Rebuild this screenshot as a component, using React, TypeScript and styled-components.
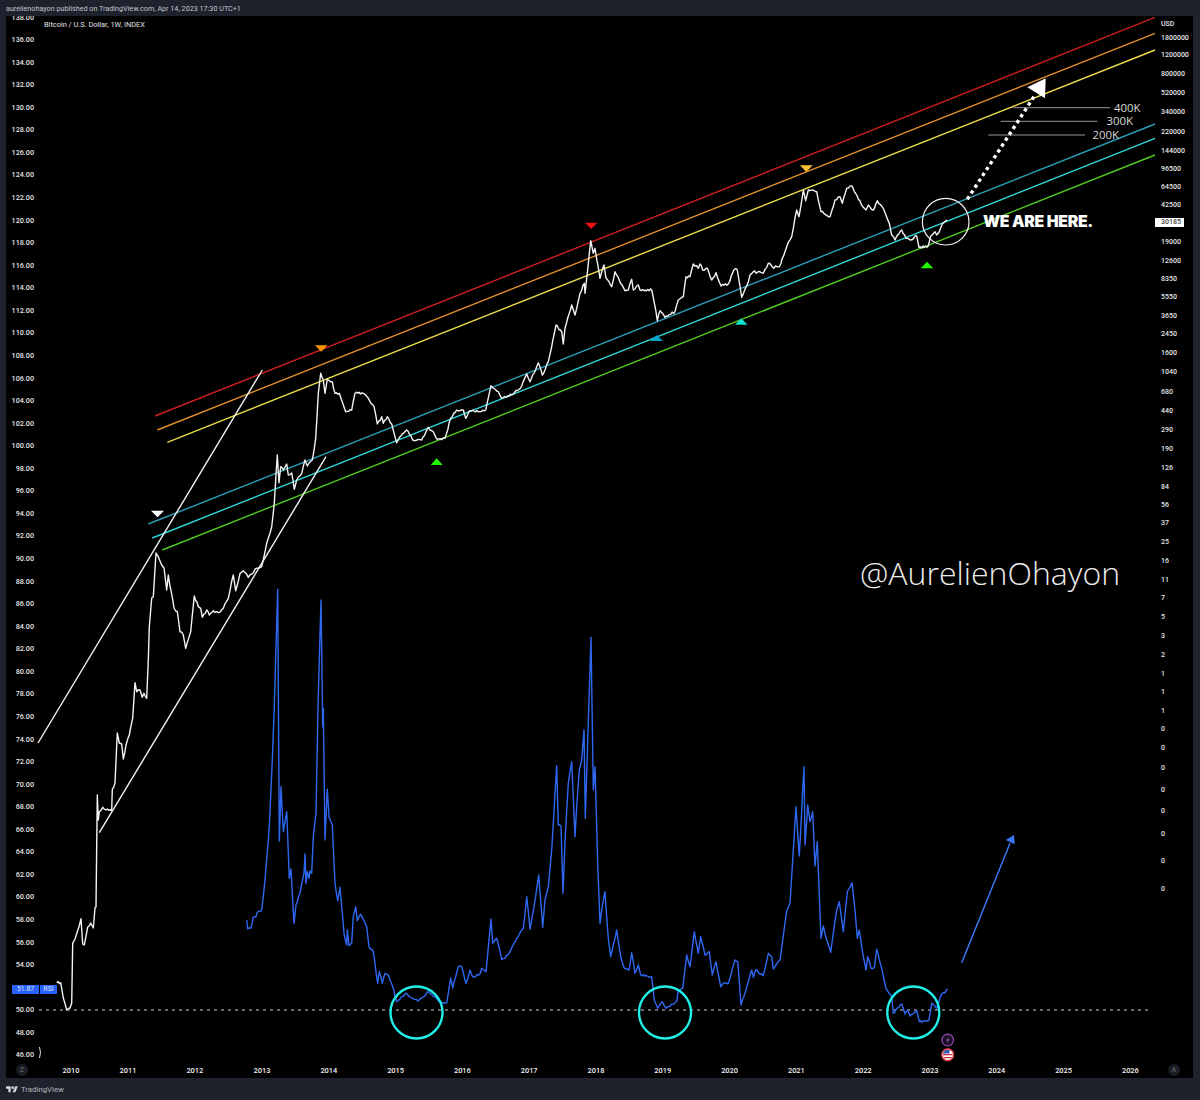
import React from 'react';
import styled, { createGlobalStyle } from 'styled-components';

const GlobalStyle = createGlobalStyle`
  html, body {
    margin: 0;
    padding: 0;
    background: #1e222d;
  }
`;

// own compositing layer, so the small axis text is anti-aliased in plain grey
const Page = styled.div`
  width: 1200px;
  height: 1100px;
  display: flex;
  flex-direction: column;
  background: #1e222d;
  font-family: Roboto, "Liberation Sans", sans-serif;
  overflow: hidden;
  will-change: opacity;
`;

const TopBar = styled.header`
  height: 16px;
  flex: none;
  padding: 1px 0 0 6px;
  box-sizing: border-box;
  display: flex;
  align-items: center;
  font-size: 7.2px;
  color: #c2c5ce;
`;

const ChartFrame = styled.main`
  position: relative;
  width: 1187px;
  height: 1062px;
  margin-left: 6px;
  flex: none;
  background: #000;
  display: grid;
  grid-template-columns: 32px 1117px 38px;
  grid-template-rows: 1044px 18px;
`;

const ChartTitle = styled.div`
  position: absolute;
  left: 38px;
  top: 4px;
  font-size: 7.4px;
  line-height: 10px;
  color: #e0e2e8;
`;

const PriceAxis = styled.div`
  overflow: hidden;
  display: flex;
  flex-direction: column;
`;

const PriceLabel = styled.div`
  flex: none;
  height: 22.57px;
  line-height: 22.57px;
  padding-right: 4px;
  text-align: right;
  font-size: 7.2px;
  font-weight: 500;
  color: #e4e6ea;
  &:first-child {
    margin-top: -9.5px;
  }
`;

const Plot = styled.div`
  position: relative;
  width: 1117px;
  height: 1044px;
`;

const PlotSvg = styled.svg`
  display: block;
  width: 100%;
  height: 100%;
  overflow: visible;
`;

const Series = styled.polyline<{ $color: string }>`
  fill: none;
  stroke: ${(p) => p.$color};
  stroke-width: 1.4;
  stroke-linejoin: round;
`;

const Trend = styled.line<{ $color: string }>`
  stroke: ${(p) => p.$color};
  stroke-width: 1.4;
`;

const Ring = styled.circle<{ $color: string; $width: number }>`
  fill: none;
  stroke: ${(p) => p.$color};
  stroke-width: ${(p) => p.$width};
`;

const LevelNote = styled.span<{ $x: number; $y: number }>`
  position: absolute;
  left: ${(p) => p.$x - 38}px;
  top: ${(p) => p.$y - 16}px;
  transform: translateY(-50%);
  font-family: "Open Sans", sans-serif;
  font-size: 11.4px;
  line-height: 12px;
  color: #d8d8d8;
`;

const HereNote = styled.span`
  position: absolute;
  left: 945px;
  top: 205.2px;
  transform: translateY(-50%);
  font-family: Inter, sans-serif;
  font-size: 15.8px;
  font-weight: 900;
  letter-spacing: -0.3px;
  white-space: nowrap;
  color: #fff;
`;

const Watermark = styled.span`
  position: absolute;
  left: 822px;
  top: 556px;
  transform: translateY(-50%);
  font-family: "Open Sans", sans-serif;
  font-size: 32px;
  font-weight: 300;
  white-space: nowrap;
  color: #ececec;
`;

const ValueAxis = styled.div`
  display: flex;
  flex-direction: column;
  padding-top: 1px;
`;

const ValueLabel = styled.div`
  flex: none;
  display: flex;
  align-items: center;
  padding-left: 6px;
  font-size: 7px;
  font-weight: 500;
  color: #e4e6ea;
`;

const PriceTag = styled.span`
  width: 29px;
  height: 9px;
  margin-left: -6.5px;
  padding-left: 6.5px;
  box-sizing: border-box;
  line-height: 9px;
  background: #fff;
  color: #444;
`;

const TimeAxis = styled.div`
  grid-column: 1 / -1;
  display: flex;
  align-items: center;
  padding: 2px 0 0 10px;
`;

const CornerBadge = styled.span<{ $end?: boolean }>`
  width: 12px;
  height: 12px;
  flex: none;
  border-radius: 50%;
  display: flex;
  align-items: center;
  justify-content: center;
  margin: ${(p) => (p.$end ? '0 13px 0 auto' : '0 19px 0 0')};
  background: #1b1d24;
  color: #5d606b;
  font-size: 6.5px;
  font-weight: 500;
`;

const YearLabel = styled.span<{ $width: number }>`
  flex: 0 0 ${(p) => p.$width}px;
  text-align: center;
  font-size: 7.4px;
  font-weight: 500;
  color: #f2f2f2;
`;

const RsiTag = styled.div`
  position: absolute;
  left: 6px;
  top: 969px;
  height: 9px;
  display: flex;
  gap: 1px;
  font-size: 6.8px;
  line-height: 9px;
  color: #dbe5ff;
`;

const RsiCell = styled.span<{ $width: number }>`
  width: ${(p) => p.$width}px;
  text-align: center;
  background: #2962ff;
`;

const Footer = styled.footer`
  flex: 1;
  display: flex;
  align-items: center;
  gap: 3px;
  padding-left: 6px;
  font-size: 7.8px;
  color: #b2b5be;
`;

const priceLine = `56.7,982.7 60.7,982.7 63.3,998 66.7,1010 70,1008 71.7,1003 72.7,943.3 75,939 77.3,931.7 81,918.7 82.7,944 84.3,945 87.7,927 90.7,923 93.3,928 95,908 96,906.7 97.3,795 98.3,820 99.3,811.7 102.7,807.3 106,810 111.7,810.7 112.3,789.3 115,783 117.3,733 119.3,743 121.7,744 123.3,759 126,745 129.3,735 132.7,718 135,682.7 136.7,691.7 140,690 142.3,697.3 144,693.3 146.7,698.3 148.3,660 149.3,626.7 151.7,598 153.3,597 156,553 158.3,556.7 161.7,565 164,568 166.7,590 168.3,575 174,608 177.3,611.7 180,631.7 183.3,635 185.7,648.3 190.7,631.7 194.3,596 198.3,606.7 200.7,608.3 202.3,617.3 206.7,610 209.3,615 213.3,610.7 218.3,612.7 223.3,608.3 228.3,598.3 233.3,575 235.7,590.7 240,573.3 243.3,570.7 248.3,577.3 256.7,568.3 261.7,566.7 266.7,543.3 271.7,526.7 274.3,503 277.3,455 279,482.7 280.7,466.7 283.3,470 286.7,464 288.3,475 291.7,473 294.3,489.3 296.7,480 301.7,473.3 305,460 307.3,466 312.3,460 315.7,438.3 318.3,393.3 320.7,373.3 323.3,380 325,393.3 327.3,379.3 332.3,381.7 335,393.3 339.3,393.3 345.7,411.7 351.7,410 355,393.3 363.3,393.3 368.3,398.3 374,406.7 377.3,424 381.7,416.7 383.3,423.3 387.3,416.7 391.7,424 396.7,442.7 400,436.7 406.7,430 412.7,440 421.7,440 428.3,427.3 433.3,431.7 437.3,439.3 445,438.3 450.7,418.3 456.7,410 463.3,410 465.7,418.3 470,410.7 478.3,411.7 485.7,410 491,385.7 498.3,391.7 501.7,398.3 513.3,394 521.7,386 526.7,374 530,381.7 538.3,362.7 542.3,375 548.3,361.7 556,325 561.7,331.7 563.3,344 565,328.3 571.7,305 575,315 580,293.3 584.3,283.3 585,293.3 590.7,240.7 593.3,253.3 595,248.3 600,278.3 604,265 606,278.3 611.7,286.7 615,271.7 625,290.7 628.3,290 631.7,279.3 633.3,290 638.3,285 640,290 651.7,290 656,311.7 657.3,320.7 660,310.7 665,317.3 675,311.7 678.3,300 683.3,296.7 686,276.7 690,276.7 693.3,264 698.3,268.3 700,264 702.7,270 707.3,268.3 711.7,280 716,272.7 721,286 728.3,284 734.3,269.3 737.3,270 741.7,297.3 746.7,286 750,275 753.3,271.7 763.3,273.3 768.3,263.3 772.7,267.3 779.3,266.7 786.7,246.7 791.7,236.7 796.7,210 799,216.7 803.3,190 805.7,200.7 808.3,190 816.7,191.7 821,211.7 830,216.7 835,200 840,196.7 842.3,203.3 846.7,188.3 851.7,186 858.3,199.3 866,210 868.3,205 873.3,210 877.3,200.7 883.3,208.3 889.3,223.3 891.7,235 895,240 901.7,230 906,238.3 910,240 916.7,236 919,247.3 928.3,246 930.7,236 935,231.7 936.7,235 939.3,231.7 942.7,223.3 947.3,220`;

const rsiLine = `246.7,920 247.7,929 250.7,928.3 253.3,917.3 256,916.7 257.3,912.3 261.7,910 265,880 269.3,826.7 272.3,760 274.3,706.7 277.7,589.3 279.3,841 281,786.7 283.3,831.7 286.7,811.7 289.3,878.3 291,869 294,923.3 296,905 300,893.3 304,873.3 305,854 306,883.3 307.3,871.7 309,878.3 310,871 311.7,873.3 313.3,836.7 316,813.3 318,706.7 321,600 322.7,726.7 323.3,708.3 325,840 327.3,789.3 329,816.7 332.3,825 335,883.3 337.7,900.7 340,887.3 344,933.3 346.7,945 347.3,930 349,945.7 351.7,943.3 353.3,916.7 355.7,906.7 357.3,920.7 360.7,914.3 366.7,926.7 369,946.7 373.3,951.7 377.7,983.3 379.3,971.7 382.3,983.3 385,973.3 388.3,975 393.3,988.3 396.7,1001.7 400,999 406.7,993.3 411.7,998 418,1001 423,997 428.3,991.7 435,996.7 441.7,1003.3 446.7,1003 450.7,978 452.7,988 458.3,966.7 461.7,966.7 466,983.3 470,970 472.7,976.7 480,974 481.7,968.3 486,971.7 491,919 492.7,943.3 496.7,938.3 501.7,959.3 505,958.3 510,951.7 516.7,938.3 523.3,928.3 526.7,896.7 530,929.3 534,906.7 538.7,875 542.7,927.3 545,900 548.3,886.7 551.7,850 556.7,765.7 558.3,825 561,826 563,893.3 565,841.7 568.3,783.3 571.7,761.7 575,836.7 576.7,806.7 579.3,770 581.7,760 584,730 585.3,818.3 591,637.3 593.3,790 595,766.7 597.7,863.3 600,923.3 603.3,900 605,891.7 608.3,938.3 610.7,956.7 616.7,930 620.7,956.7 624.3,968.3 629,970 631.7,952.7 635,973.3 638.3,965 640.7,975 651.7,976.7 654.3,1000 657.7,1008.3 661.7,1001.7 666,1008.3 676.7,1001.7 678.3,990 682.7,988.3 686.7,955 690,966.7 694.3,931.7 698.3,953.3 700.7,936.7 705,955 709.3,951.7 712.3,975 716,961.7 720.7,986.7 723.3,983.3 728.3,983.3 735,960 737.7,961.7 741,1005 748.3,981.7 751.7,970 753.3,977.3 755.7,970 763.3,975.7 768.3,953.3 771.7,956.7 773.3,969 776.7,964 780,960 786.7,910.7 790,903.3 796,806.7 799.3,856 804,766.7 805,845 807.7,805 810,821.7 812.7,811.7 815,866 817.3,841.7 821,938.3 823.3,926 826.7,940 830.7,952.3 836.7,910 839.3,901.7 843.3,931.7 847.3,891.7 852,882.7 855,910 857.3,938.3 859.3,930 862.7,953.3 866,970 867.7,956.7 871,968.3 874.3,967.7 876.7,949.3 881.7,968.3 886,988.3 891.7,996.7 893.3,1013.3 901.7,1004 905,1014 907.7,1010 910,1016 916.7,1010.7 919.3,1021.7 928.7,1020.7 931.7,1003.3 936.7,1008.3 941.7,994 945,992.7 947.3,988.7`;

// the traced points are coarser than the weekly candles, so long segments get small wiggles
const roughen = (line: string, amount: number) => {
  const pts = line.split(' ').map((p) => p.split(',').map(Number));
  let seed = 7;
  const out: string[] = [];
  pts.forEach(([x, y], i) => {
    out.push(`${x},${y}`);
    const next = pts[i + 1];
    if (!next || next[0] - x < 2.6) return;
    const steps = Math.floor((next[0] - x) / 1.3);
    for (let s = 1; s < steps; s++) {
      seed = (seed * 137 + 59) % 251;
      const t = s / steps;
      const jitter = (seed / 125 - 1) * amount;
      out.push(`${(x + (next[0] - x) * t).toFixed(1)},${(y + (next[1] - y) * t + jitter).toFixed(1)}`);
    }
  });
  return out.join(' ');
};

const trends = [
  { color: '#d01f1f', x1: 155, y1: 416, x2: 1155, y2: 17.3 },
  { color: '#df8c2b', x1: 157.3, y1: 430, x2: 1155, y2: 33.3 },
  { color: '#ecdc4a', x1: 167.3, y1: 442.3, x2: 1155, y2: 50 },
  { color: '#2a9db8', x1: 148.3, y1: 524, x2: 1155, y2: 124 },
  { color: '#2cd6d6', x1: 152.3, y1: 538, x2: 1155, y2: 138.3 },
  { color: '#4fc91d', x1: 162.3, y1: 550, x2: 1155, y2: 155 },
  { color: '#f2f2f2', x1: 38, y1: 743, x2: 262.3, y2: 370 },
  { color: '#f2f2f2', x1: 99.3, y1: 832.7, x2: 326, y2: 456.7 },
];

const markers = [
  { color: '#ffffff', points: '151,510.7 164,510.7 157.5,517.3' },
  { color: '#ff9800', points: '315,345.3 327.5,345.3 321.2,351.7' },
  { color: '#f01010', points: '585,222.7 597.5,222.7 591.2,229' },
  { color: '#fbc02d', points: '800,165.3 812.7,165.3 806.3,172' },
  { color: '#22f800', points: '430.7,465 442.7,465 436.7,458.3' },
  { color: '#00a5cc', points: '650,341 663,341 656.5,335' },
  { color: '#14e0cf', points: '735,324.7 747.5,324.7 741.2,318.3' },
  { color: '#22f800', points: '920.7,268.3 933.3,268.3 927,261.7' },
];

const levels = [
  { label: '400K', x1: 1013.3, x2: 1110, y: 107.7, textX: 1114 },
  { label: '300K', x1: 1000.7, x2: 1097.3, y: 121.3, textX: 1106.5 },
  { label: '200K', x1: 988.3, x2: 1085, y: 135, textX: 1092.5 },
];

const priceLabels = Array.from({ length: 47 }, (_, i) => (138 - i * 2).toFixed(2));

// centre y of each label on the right scale, in page pixels
const scale: [string, number][] = [
  ['USD', 23], ['1800000', 36], ['1200000', 54], ['800000', 72], ['520000', 92], ['340000', 111],
  ['220000', 131], ['144000', 150], ['96500', 168], ['64500', 186], ['42500', 205], ['30185', 220.5],
  ['19000', 241], ['12600', 259.5], ['8350', 278], ['5550', 296], ['3650', 315], ['2450', 333],
  ['1600', 352.5], ['1040', 371.5], ['680', 390], ['440', 410.5], ['290', 429], ['190', 448.5],
  ['126', 467], ['84', 485.5], ['56', 504], ['37', 522], ['25', 540], ['16', 560], ['11', 578.5],
  ['7', 597], ['5', 616.5], ['3', 635], ['2', 653.5], ['1', 672.5], ['1', 691.5], ['1', 710],
  ['0', 728], ['0', 747], ['0', 767], ['0', 788], ['0', 812], ['0', 829], ['0', 860], ['0', 891],
];

const slotHeight = (i: number) => {
  const top = i === 0 ? 16 : (scale[i - 1][1] + scale[i][1]) / 2;
  const bottom = i === scale.length - 1 ? scale[i][1] + 9 : (scale[i][1] + scale[i + 1][1]) / 2;
  return bottom - top;
};

const years: [string, number][] = [
  ['2010', 48], ['2011', 66], ['2012', 67.6], ['2013', 66.8], ['2014', 66.8], ['2015', 66.8],
  ['2016', 66.8], ['2017', 66.8], ['2018', 66.8], ['2019', 66.8], ['2020', 66.8], ['2021', 66.8],
  ['2022', 66.8], ['2023', 66.8], ['2024', 66.8], ['2025', 66.8], ['2026', 66.8],
];

const App: React.FC = () => {
  return (
    <>
      <GlobalStyle />
      <Page>
        <TopBar>aurelienohayon published on TradingView.com, Apr 14, 2023 17:30 UTC+1</TopBar>
        <ChartFrame>
          <PriceAxis>
            {priceLabels.map((label) => (
              // 52.00 sits under the RSI tag
              <PriceLabel key={label}>{label === '52.00' ? '' : label}</PriceLabel>
            ))}
          </PriceAxis>
          <Plot>
            <PlotSvg viewBox="38 16 1117 1044">
              <defs>
                <clipPath id="flag-clip">
                  <circle cx="947.7" cy="1054.7" r="5" />
                </clipPath>
              </defs>
              {trends.map((t) => (
                <Trend key={`${t.x1}-${t.y1}`} $color={t.color} x1={t.x1} y1={t.y1} x2={t.x2} y2={t.y2} />
              ))}
              <line x1="39" y1="1010" x2="1152" y2="1010" stroke="#cfcfcf" strokeWidth="1" strokeDasharray="3 4" />
              <Series $color="#2f68f0" points={roughen(rsiLine, 1)} />
              <Series $color="#f4f4f4" points={roughen(priceLine, 1.2)} />
              {markers.map((m) => (
                <polygon key={m.points} points={m.points} fill={m.color} />
              ))}
              {levels.map((l) => (
                <line key={l.label} x1={l.x1} y1={l.y} x2={l.x2} y2={l.y} stroke="#9a9a9a" strokeWidth="1" />
              ))}
              <Ring $color="#f2f2f2" $width={1.2} cx="945.7" cy="221.7" r="23.3" />
              <line x1="967.3" y1="199.3" x2="1035" y2="95" stroke="#fff" strokeWidth="3.4" strokeDasharray="3.4 3.6" />
              <polygon points="1027.3,87.3 1045.7,78.3 1045,98.3" fill="#fff" />
              <Ring $color="#20f0e8" $width={2.4} cx="416.5" cy="1012.5" r="26" />
              <Ring $color="#20f0e8" $width={2.4} cx="665" cy="1012.5" r="26" />
              <Ring $color="#20f0e8" $width={2.4} cx="913.3" cy="1012.5" r="26" />
              <line x1="961.7" y1="962.7" x2="1010" y2="843.3" stroke="#3b78f5" strokeWidth="1.5" />
              <polygon points="1005.7,840 1014,835 1014.7,844.3" fill="#3b78f5" />
              <path d="M39.5 1047 q2 5.500 0 11" fill="none" stroke="#e8e8e8" strokeWidth="1" />
              <circle cx="947.7" cy="1040" r="5.800" fill="#1a1026" stroke="#8e4bb0" strokeWidth="1.2" />
              <path d="M949 1036.500 l-3 4 h2 l-1.300 3 l3 -4 h-2 z" fill="#9a63bd" />
              <circle cx="947.7" cy="1054.7" r="6" fill="#fff" stroke="#d3303f" strokeWidth="1.400" />
              <g clipPath="url(#flag-clip)">
                <rect x="942" y="1054" width="12" height="1.300" fill="#d3303f" />
                <rect x="942" y="1057" width="12" height="1.300" fill="#d3303f" />
                <rect x="942" y="1049" width="7.500" height="4.500" fill="#3559b5" />
              </g>
            </PlotSvg>
            {levels.map((l) => (
              <LevelNote key={l.label} $x={l.textX} $y={l.y}>
                {l.label}
              </LevelNote>
            ))}
            <HereNote>WE ARE HERE.</HereNote>
            <Watermark>@AurelienOhayon</Watermark>
          </Plot>
          <ValueAxis>
            {scale.map(([label], i) => (
              <ValueLabel key={`${label}-${i}`} style={{ height: slotHeight(i) }}>
                {label === '30185' ? <PriceTag>{label}</PriceTag> : label}
              </ValueLabel>
            ))}
          </ValueAxis>
          <TimeAxis>
            <CornerBadge>Z</CornerBadge>
            {years.map(([year, width]) => (
              <YearLabel key={year} $width={width}>
                {year}
              </YearLabel>
            ))}
            <CornerBadge $end>A</CornerBadge>
          </TimeAxis>
          <ChartTitle>Bitcoin / U.S. Dollar, 1W, INDEX</ChartTitle>
          <RsiTag>
            <RsiCell $width={27}>51.87</RsiCell>
            <RsiCell $width={17}>RSI</RsiCell>
          </RsiTag>
        </ChartFrame>
        <Footer>
          <svg width="12" height="8" viewBox="0 0 36 24" fill="#d1d4dc">
            <path d="M14 22H7V11H0V4h14v18zM28 22h-8l7.500-18h8L28 22z" />
            <circle cx="20" cy="8" r="4" />
          </svg>
          TradingView
        </Footer>
      </Page>
    </>
  );
};

export default App;
